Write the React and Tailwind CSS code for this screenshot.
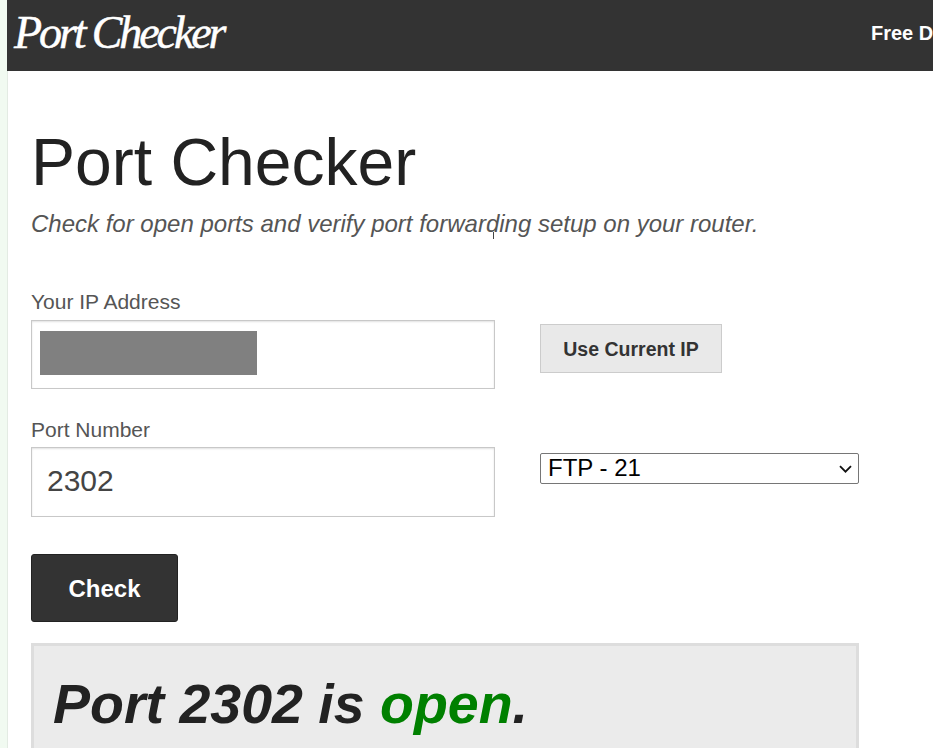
export default function App() {
  return (
    <div className="flex h-[748px] w-[933px] overflow-hidden bg-white font-['Liberation_Sans',Arial,sans-serif] text-[#222]">
      <div className="h-full w-[8px] shrink-0 border-r border-[#e3ebe3] bg-[#f1faf1]" />
      <div className="min-w-0 flex-1">
        <header className="-ml-px flex h-[71px] items-center overflow-hidden bg-[#333] pl-[7px]">
          <span className="-mt-[5px] w-[220px] shrink-0 whitespace-nowrap font-['Liberation_Serif',serif] text-[46px] italic leading-none tracking-[-3.1px] text-white [-webkit-text-stroke:0.5px_white]">Port Checker</span>
          <span className="ml-[637px] -mt-[5px] shrink-0 whitespace-nowrap text-[20px] font-bold text-white">Free DNS</span>
        </header>
        <main className="relative pt-[50px] pl-[23px]">
          <h1 className="text-[66px] leading-[82px] font-normal text-[#222]">Port Checker</h1>
          <p className="mt-[5px] text-[24px] leading-[32px] italic text-[#555]">Check for open ports and verify port forwarding setup on your router.</p>
          <span className="absolute top-[161px] left-[485px] h-[7px] w-px bg-[#444]" />
          <div className="mt-[50px] flex">
            <div className="w-[464px]">
              <div className="text-[21px] leading-[24px] text-[#555]">Your IP Address</div>
              <div className="mt-[6px] flex h-[69px] items-center border border-[#c8c8c8] bg-white pl-[8px] shadow-[inset_0_1px_2px_rgba(0,0,0,0.12)]">
                <div className="mt-[-4px] h-[44px] w-[217px] bg-[#808080]" />
              </div>
            </div>
            <div className="ml-[45px] pt-[34px]">
              <button className="h-[49px] w-[182px] border border-[#ccc] bg-[#e9e9e9] pt-[2px] text-[19.5px] font-bold text-[#333]">Use Current IP</button>
            </div>
          </div>
          <div className="mt-[29px] flex">
            <div className="w-[464px]">
              <div className="text-[21px] leading-[24px] text-[#555]">Port Number</div>
              <div className="mt-[5px] flex h-[70px] items-center border border-[#c8c8c8] bg-white pb-[3px] pl-[15px] text-[30px] text-[#444] shadow-[inset_0_1px_2px_rgba(0,0,0,0.12)]">2302</div>
            </div>
            <div className="ml-[45px] pt-[35px]">
              <div className="flex h-[31px] w-[319px] items-center justify-between rounded-[2px] border border-[#767676] bg-white pr-[6px] pb-[2px] pl-[7px] text-[24px] text-black">
                <span>FTP - 21</span>
                <svg className="mt-[2px]" width="13" height="8" viewBox="0 0 13 8" fill="none" stroke="#111" strokeWidth="1.8"><path d="M1 1.2l5.5 5.5L12 1.2" /></svg>
              </div>
            </div>
          </div>
          <button className="mt-[37px] block h-[68px] w-[147px] rounded-[3px] border border-[#222] bg-[#333] pt-[2px] text-[24px] font-bold text-white">Check</button>
          <div className="mt-[21px] h-[120px] w-[828px] border-[3px] border-[#ddd] bg-[#ebebeb] pt-[26px] pl-[19px] text-[55.5px] leading-[64px] font-bold italic text-[#222]">
            Port 2302 is <span className="text-[#008000]">open</span>.
          </div>
        </main>
      </div>
    </div>
  );
}
